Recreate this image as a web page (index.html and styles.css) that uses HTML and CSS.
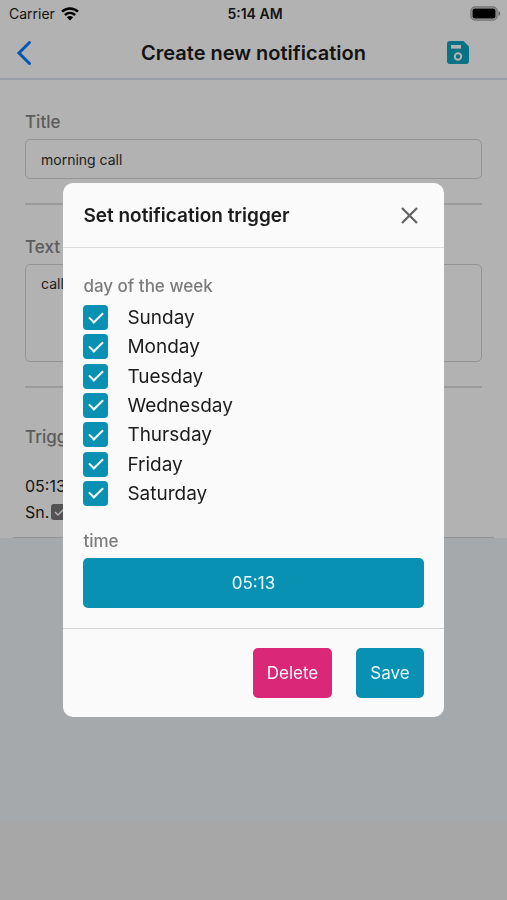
FILE: index.html
```html
<!DOCTYPE html>
<html lang="en">
<head>
<meta charset="utf-8">
<meta name="viewport" content="width=device-width, initial-scale=1">
<title>Create new notification</title>
<link rel="stylesheet" href="styles.css">
</head>
<body>
<div class="screen">
  <div class="status">
    <div class="carrier">
      <span>Carrier</span>
      <svg width="18" height="14" viewBox="0 0 18 14" fill="none" stroke="#000" stroke-width="2.5" aria-hidden="true"><path d="M1 4.7C5.6.4 12.4.4 17 4.7M3.9 8c3-2.7 7.200-2.700 10.200 0"/><path d="M5.900 10.300c1.800-1.600 4.400-1.600 6.200 0L9 13.500z" fill="#000" stroke="none"/></svg>
    </div>
    <span class="clock">5:14 AM</span>
    <svg class="battery" width="31" height="15" viewBox="0 0 31 15" aria-hidden="true"><rect x="1" y="1" width="26" height="13" rx="4" fill="none" stroke="#a8a8a8" stroke-width="1.500"/><rect x="2.500" y="2.500" width="23" height="10" rx="2"/><path d="M28.500 5c2.300 1 2.300 4 0 5z" fill="#8c8c8c"/></svg>
  </div>
  <header class="bar">
    <button class="icon-button" type="button" aria-label="Back">
      <svg width="16" height="26" viewBox="0 0 16 26" fill="none" stroke="#087cff" stroke-width="3" stroke-linecap="round"><path d="M13.500 2.500 3 13l10.500 10.500"/></svg>
    </button>
    <h1>Create new notification</h1>
    <button class="icon-button save-icon" type="button" aria-label="Save notification">
      <svg width="22" height="23" viewBox="0 0 22 23"><path d="M3 0h13.500L22 5.500V20a3 3 0 0 1-3 3H3a3 3 0 0 1-3-3V3a3 3 0 0 1 3-3z" fill="#0da5c1"/><rect x="4" y="4" width="10" height="3.600" fill="#fff"/><circle cx="11" cy="15.500" r="3.200" fill="none" stroke="#fff" stroke-width="2"/></svg>
    </button>
  </header>
  <main class="form">
    <div class="field">
      <label for="title">Title</label>
      <input id="title" type="text" value="morning call">
    </div>
    <div class="field">
      <label for="text">Text</label>
      <textarea id="text">call</textarea>
    </div>
    <section class="triggers">
      <h2>Trigger</h2>
      <p>05:13</p>
      <p class="days"><span>Sn.</span><svg width="16" height="16" viewBox="0 0 16 16" aria-hidden="true"><rect width="16" height="16" rx="3" fill="#777"/><path d="m4 8 3 3 6-6" fill="none" stroke="#fff" stroke-width="1.500"/></svg></p>
    </section>
  </main>
  <div class="rest"></div>
  <div class="bottom"></div>
</div>

<div class="backdrop">
  <form class="modal" role="dialog" aria-labelledby="dialog-title">
    <div class="modal-head">
      <h2 id="dialog-title">Set notification trigger</h2>
      <button class="icon-button close" type="button" aria-label="Close">
        <svg width="17" height="17" viewBox="0 0 17 17" fill="none" stroke="#666" stroke-width="2.400"><path d="m1 1 15 15M16 1 1 16"/></svg>
      </button>
    </div>
    <div class="modal-body">
      <fieldset>
        <legend>day of the week</legend>
        <div class="day-list">
          <label><input type="checkbox" checked>Sunday</label>
          <label><input type="checkbox" checked>Monday</label>
          <label><input type="checkbox" checked>Tuesday</label>
          <label><input type="checkbox" checked>Wednesday</label>
          <label><input type="checkbox" checked>Thursday</label>
          <label><input type="checkbox" checked>Friday</label>
          <label><input type="checkbox" checked>Saturday</label>
        </div>
      </fieldset>
      <label class="time-label" for="time">time</label>
      <button class="button time" id="time" type="button">05:13</button>
    </div>
    <div class="modal-foot">
      <button class="button delete" type="button">Delete</button>
      <button class="button" type="button">Save</button>
    </div>
  </form>
</div>
</body>
</html>
```
FILE: styles.css
```css
* {
  box-sizing: border-box;
}

body,
h1,
h2,
p,
fieldset {
  margin: 0;
}

body,
button,
input,
textarea {
  font-family: Inter, "Liberation Sans", sans-serif;
}

body {
  color: #1c1c1c;
  background: #f0f0f0;
}

svg {
  display: block;
  flex: none;
}

.screen {
  display: flex;
  flex-direction: column;
  min-height: 100vh;
  background: #fff;
}

.status {
  display: grid;
  grid-template-columns: 1fr auto 1fr;
  align-items: center;
  height: 27px;
  padding: 0 6px 0 9px;
  font-size: 14px;
}

.carrier {
  display: flex;
  align-items: center;
  gap: 6px;
}

.clock {
  font-weight: 600;
}

.battery {
  justify-self: end;
}

.bar {
  display: grid;
  grid-template-columns: 1fr auto 1fr;
  align-items: center;
  height: 53px;
  padding: 0 38px 0 16px;
  border-bottom: 2px solid #d8e0f0;
}

.bar h1 {
  padding-left: 22px;
  font-size: 20px;
  font-weight: 600;
}

.icon-button {
  justify-self: start;
  padding: 0;
  border: 0;
  background: none;
}

.save-icon {
  justify-self: end;
}

.form {
  padding: 0 13px;
}

.field {
  margin: 0 12px;
  padding-bottom: 24px;
  border-bottom: 2px solid #dedede;
}

.field label,
.triggers h2 {
  display: block;
  padding-top: 31px;
  font-size: 17px;
  font-weight: 500;
  line-height: 22px;
  color: #858585;
}

.field input,
.field textarea {
  display: block;
  width: 100%;
  margin-top: 6px;
  padding: 10px 15px;
  border: 1px solid #d4d4d4;
  border-radius: 5px;
  background: none;
  font-size: 14px;
  line-height: 18px;
  color: #2e2e2e;
  resize: none;
}

.field input {
  height: 40px;
}

.field textarea {
  height: 98px;
}

.triggers {
  padding: 7px 12px 12px;
  border-bottom: 1px solid #d4d4d4;
  font-size: 16px;
  line-height: 26px;
}

.triggers h2 {
  margin-bottom: 25px;
}

.days {
  display: flex;
  align-items: center;
  gap: 2px;
}

.rest {
  flex: 1;
  background: #edf3f7;
}

.bottom {
  height: 78px;
  background: #f0f0f0;
}

.backdrop {
  position: fixed;
  inset: 0;
  display: flex;
  align-items: center;
  justify-content: center;
  background: rgba(0, 0, 0, 0.3);
}

.modal {
  width: 75%;
  overflow: hidden;
  border-radius: 10px;
  background: #fafafa;
}

.modal-head {
  display: flex;
  align-items: center;
  justify-content: space-between;
  height: 65px;
  padding: 0 26px 0 20px;
  border-bottom: 1px solid #dcdcdc;
}

.modal-head h2 {
  font-size: 19px;
  font-weight: 600;
}

.modal-body {
  padding: 27px 20px 20px;
}

fieldset {
  min-width: 0;
  padding: 0;
  border: 0;
}

legend,
.time-label {
  display: block;
  padding: 0;
  font-size: 17px;
  font-weight: 500;
  line-height: 22px;
  color: #7c7c7c;
}

.day-list {
  display: flex;
  flex-direction: column;
  justify-content: space-between;
  min-height: 201px;
  margin: 8px 0 24px;
}

.day-list label {
  display: flex;
  align-items: center;
  gap: 19px;
  height: 25px;
  font-size: 19px;
}

.day-list input {
  appearance: none;
  display: grid;
  place-items: center;
  width: 25px;
  height: 25px;
  margin: 0;
  border-radius: 4px;
  background: #0891b2;
}

.day-list input:checked::before {
  content: "";
  width: 12px;
  height: 6px;
  margin-bottom: 4px;
  border: solid #fafafa;
  border-width: 0 0 2px 2px;
  transform: rotate(-45deg);
}

.button {
  height: 50px;
  padding: 0 14px;
  border: 0;
  border-radius: 5px;
  background: #0891b2;
  font-size: 17px;
  color: #ecfaff;
}

.time {
  width: 100%;
  margin-top: 6px;
}

.modal-foot {
  display: flex;
  justify-content: flex-end;
  gap: 24px;
  padding: 19px 20px;
  border-top: 1px solid #d4d4d4;
}

.modal-foot .delete {
  background: #db2777;
}
```
